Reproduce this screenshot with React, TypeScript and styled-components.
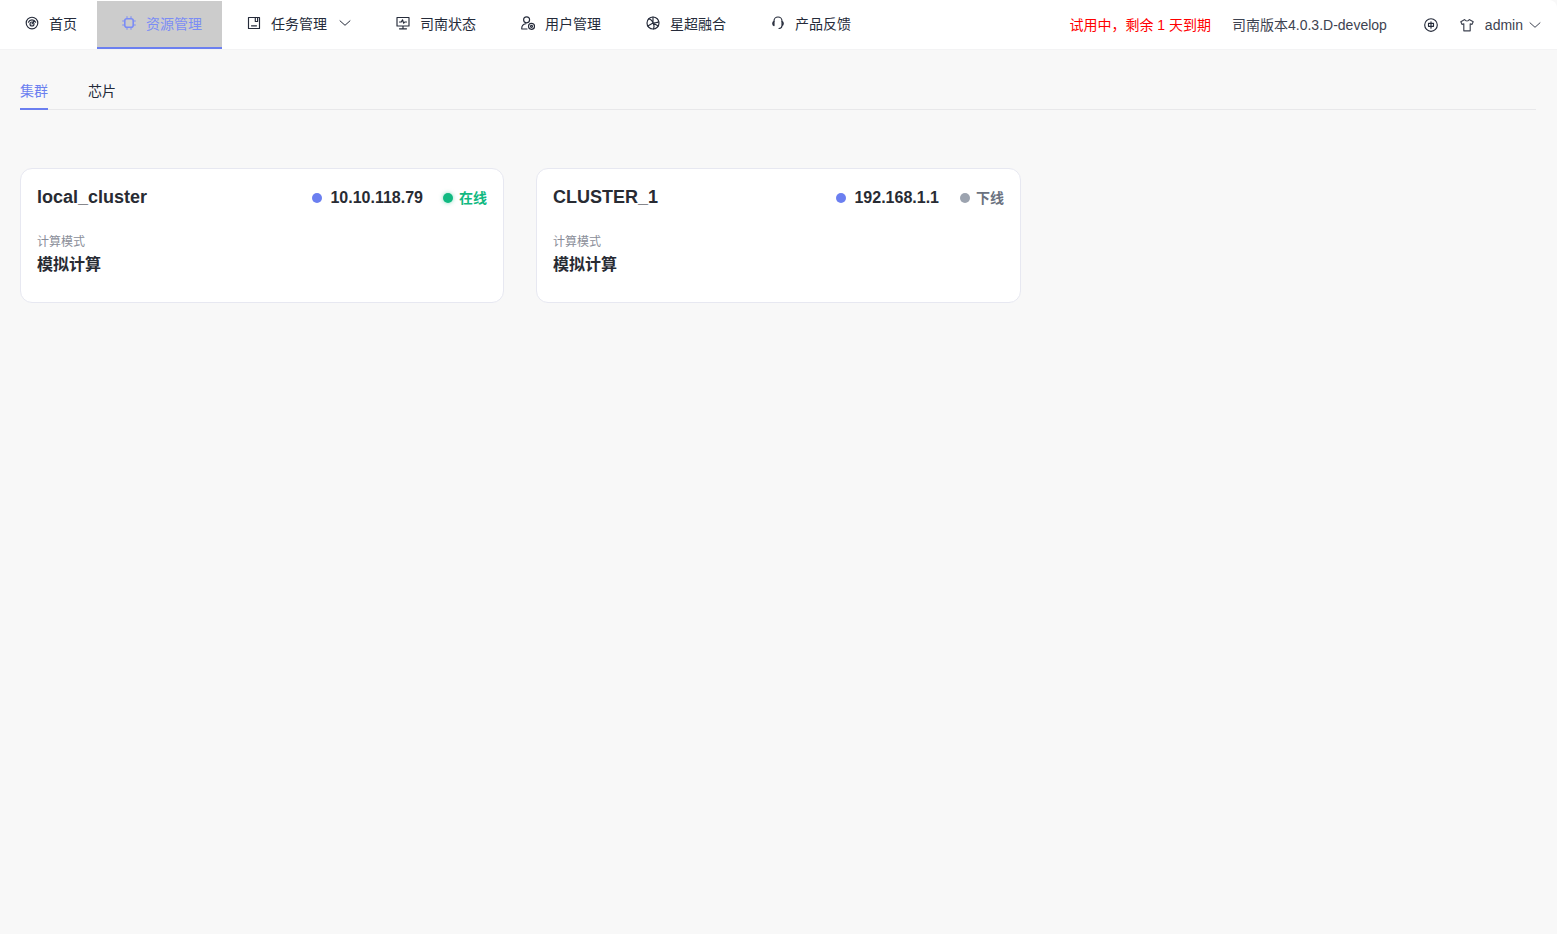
import React from "react";
import styled, { createGlobalStyle } from "styled-components";

const Global = createGlobalStyle`
  html, body { margin: 0; padding: 0; height: 100%; background: #f8f8f8; }
  #root { height: 100%; }
  * { box-sizing: border-box; }
  body { font-family: "Liberation Sans", "Noto Sans CJK SC", sans-serif; color: #252b3a; }
`;

const Page = styled.div`
  width: 1557px;
  height: 934px;
  overflow: hidden;
  background: #f8f8f8;
`;

const Header = styled.header`
  display: flex;
  align-items: stretch;
  justify-content: space-between;
  height: 50px;
  padding-top: 1px;
  background: #fff;
  border-bottom: 1px solid #f3f3f4;
  border-top-right-radius: 8px;
`;

const Nav = styled.nav`
  display: flex;
  height: 48px;
`;

const NavItem = styled.div<{ $active?: boolean }>`
  display: flex;
  align-items: center;
  gap: 10px;
  height: 48px;
  padding: 0 20px 2px 25px;
  font-size: 14px;
  color: ${(p) => (p.$active ? "#7b8cf5" : "#252b3a")};
  background: ${(p) => (p.$active ? "#cccccc" : "transparent")};
  border-bottom: 2px solid ${(p) => (p.$active ? "#6b7ff0" : "transparent")};
`;

const Glyph = styled.svg`
  flex: none;
  width: 14px;
  height: 14px;
  fill: none;
  stroke: currentColor;
  stroke-width: 1.15;
  stroke-linecap: round;
  stroke-linejoin: round;
`;

const Chevron = styled(Glyph)`
  width: 12px;
  height: 12px;
  margin-left: 2px;
  stroke-width: 1;
`;

const Right = styled.div`
  display: flex;
  align-items: center;
  height: 48px;
  padding: 0 16px 1px 0;
  font-size: 14px;
`;

const Trial = styled.span`
  margin: 0 21px 2px 0;
  color: #ff0000;
`;

const Version = styled.span`
  margin: 0 37px 2px 0;
  color: #3e4351;
`;

const Lang = styled.span`
  display: flex;
  margin-right: 22px;
`;

const User = styled.div`
  display: flex;
  align-items: center;
  gap: 11px;
  color: #3e4351;
`;

const UserName = styled.span`
  margin-right: -7px;
`;

const Main = styled.main`
  padding: 20px 21px 0 20px;
`;

const Tabs = styled.div`
  display: flex;
  gap: 40px;
  height: 40px;
  border-bottom: 1px solid #e8e8ea;
`;

const Tab = styled.div<{ $active?: boolean }>`
  height: 40px;
  line-height: 42px;
  font-size: 14px;
  color: ${(p) => (p.$active ? "#6b7ff0" : "#252b3a")};
  border-bottom: 2px solid ${(p) => (p.$active ? "#6b7ff0" : "transparent")};
`;

const Cards = styled.div`
  display: flex;
  gap: 32px;
  margin-top: 58px;
`;

const Card = styled.section<{ $width: number }>`
  width: ${(p) => p.$width}px;
  height: 135px;
  padding: 16px;
  background: #fff;
  border: 1px solid #e7e8f1;
  border-radius: 12px;
`;

const CardTop = styled.div`
  display: flex;
  align-items: center;
  height: 24px;
`;

const Title = styled.h3`
  flex: 1;
  margin: 0;
  font-size: 18px;
  line-height: 24px;
  font-weight: 700;
  color: #282b33;
`;

const Dot = styled.i<{ $color: string; $gap: number; $glow?: boolean }>`
  display: block;
  width: 10px;
  height: 10px;
  margin-right: ${(p) => p.$gap}px;
  border-radius: 50%;
  background: ${(p) => p.$color};
  box-shadow: ${(p) => (p.$glow ? `0 0 4px ${p.$color}80` : "none")};
`;

const Ip = styled.span<{ $gap: number }>`
  margin-right: ${(p) => p.$gap}px;
  font-size: 16px;
  font-weight: 700;
  color: #282b33;
`;

const Status = styled.span<{ $color: string }>`
  margin-bottom: 2px;
  font-size: 14px;
  font-weight: 700;
  color: ${(p) => p.$color};
`;

const StatusRow = styled.div`
  display: flex;
  align-items: center;
  padding-top: 2px;
`;

const Label = styled.div`
  margin-top: 24px;
  font-size: 12px;
  line-height: 18px;
  color: #8a8e99;
`;

const Value = styled.div`
  font-size: 16px;
  line-height: 28px;
  font-weight: 700;
  color: #282b33;
`;

const IconHome = () => (
  <Glyph viewBox="0 0 14 14">
    <circle cx="7" cy="7" r="5.8" />
    <circle cx="7" cy="8" r="2" />
    <path d="M7 8l2.200-3.400M3.400 6.200A3.900 3.900 0 0 1 10.600 6.200" />
  </Glyph>
);

const IconChip = () => (
  <Glyph viewBox="0 0 14 14" style={{ strokeWidth: 1.6 }}>
    <rect x="2.800" y="2.800" width="8.400" height="8.400" rx="2" />
    <path d="M5 .6v2M9 .6v2M5 11.400v2M9 11.400v2M.6 5h2M.6 9h2M11.400 5h2M11.400 9h2" strokeWidth="1" />
  </Glyph>
);

const IconTask = () => (
  <Glyph viewBox="0 0 14 14">
    <path d="M1.500 1.500h11v11h-11z" />
    <path d="M8.300 1.500v4h2.300v-4" />
    <path d="M4.500 9.800h5" />
  </Glyph>
);

const IconMonitor = () => (
  <Glyph viewBox="0 0 14 14">
    <path d="M1 1.500h12v8.500H1zM7 10v2.800M3.500 12.800h7" />
    <path d="M3.500 6h1.800l1.200-2.200 1.200 3.400 1-1.200h1.800" />
  </Glyph>
);

const IconUser = () => (
  <Glyph viewBox="0 0 14 14">
    <circle cx="5.600" cy="3.800" r="3" />
    <path d="M.8 13c-.4-3 1.400-5 4-5.200M.8 13h5.200" />
    <circle cx="10.500" cy="10.300" r="3" />
    <circle cx="10.500" cy="10.300" r="1" />
  </Glyph>
);

const IconFusion = () => (
  <Glyph viewBox="0 0 14 14">
    <circle cx="7" cy="7" r="6" />
    <path d="M7 7V1M7 7l5.200 3M7 7l-5.200 3M7 7C6 4.500 4.500 3 2.600 3M7 7c2.600-.4 4.400 0 5.800-1.200M7 7c1.300 2 1.300 4 .6 6" />
  </Glyph>
);

const IconHeadset = () => (
  <Glyph viewBox="0 0 14 14">
    <path d="M3 5.500V5a4 4 0 0 1 8 0v.5" />
    <path d="M3 5.500C1.300 5.800 1.300 9.300 3 9.600zM11 5.500c1.700.3 1.700 3.800 0 4.100zM11 9.600c0 1.800-1.200 2.800-3 2.900" />
  </Glyph>
);

const IconLang = () => (
  <Glyph viewBox="0 0 14 14">
    <circle cx="7" cy="7" r="6.300" />
    <path d="M4.500 5.300h5v3h-5zM7 3.800v6.400" />
  </Glyph>
);

const IconShirt = () => (
  <Glyph viewBox="0 0 14 14">
    <path d="M4.800 1.500 .8 3.800l1.300 2.700 1.700-.7v7h6.400v-7l1.700.7 1.300-2.700-4-2.300C8.800 3.500 5.200 3.500 4.800 1.500z" />
  </Glyph>
);

const Down = () => (
  <Chevron viewBox="0 0 12 12">
    <path d="M1 3.800 6 8.300l5-4.500" />
  </Chevron>
);

const navItems = [
  { label: "首页", icon: <IconHome /> },
  { label: "资源管理", icon: <IconChip />, active: true },
  { label: "任务管理", icon: <IconTask />, menu: true },
  { label: "司南状态", icon: <IconMonitor /> },
  { label: "用户管理", icon: <IconUser /> },
  { label: "星超融合", icon: <IconFusion /> },
  { label: "产品反馈", icon: <IconHeadset /> },
];

const clusters = [
  { name: "local_cluster", ip: "10.10.118.79", ipGap: 20, status: "在线", dot: "#10b981", text: "#10b981", glow: true, width: 484 },
  { name: "CLUSTER_1", ip: "192.168.1.1", ipGap: 21, status: "下线", dot: "#9ca3af", text: "#6b7280", glow: false, width: 485 },
];

export default function App() {
  return (
    <Page>
      <Global />
      <Header>
        <Nav>
          {navItems.map((item) => (
            <NavItem key={item.label} $active={item.active}>
              {item.icon}
              <span>{item.label}</span>
              {item.menu && <Down />}
            </NavItem>
          ))}
        </Nav>
        <Right>
          <Trial>试用中，剩余 1 天到期</Trial>
          <Version>司南版本4.0.3.D-develop</Version>
          <Lang>
            <IconLang />
          </Lang>
          <User>
            <IconShirt />
            <UserName>admin</UserName>
            <Down />
          </User>
        </Right>
      </Header>
      <Main>
        <Tabs>
          <Tab $active>集群</Tab>
          <Tab>芯片</Tab>
        </Tabs>
        <Cards>
          {clusters.map((c) => (
            <Card key={c.name} $width={c.width}>
              <CardTop>
                <Title>{c.name}</Title>
                <StatusRow>
                  <Dot $color="#6b7ff0" $gap={8} />
                  <Ip $gap={c.ipGap}>{c.ip}</Ip>
                  <Dot $color={c.dot} $gap={6} $glow={c.glow} />
                  <Status $color={c.text}>{c.status}</Status>
                </StatusRow>
              </CardTop>
              <Label>计算模式</Label>
              <Value>模拟计算</Value>
            </Card>
          ))}
        </Cards>
      </Main>
    </Page>
  );
}
